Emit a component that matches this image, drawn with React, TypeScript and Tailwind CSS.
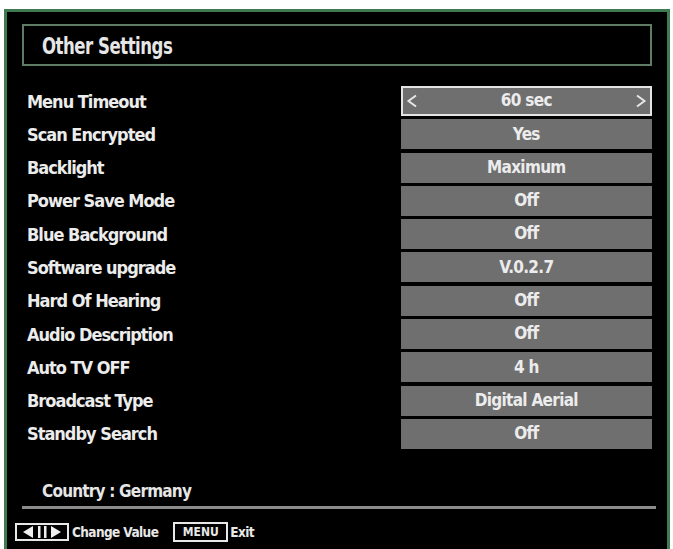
import React from "react";

const rows: [string, string][] = [
  ["Menu Timeout", "60 sec"],
  ["Scan Encrypted", "Yes"],
  ["Backlight", "Maximum"],
  ["Power Save Mode", "Off"],
  ["Blue Background", "Off"],
  ["Software upgrade", "V.0.2.7"],
  ["Hard Of Hearing", "Off"],
  ["Audio Description", "Off"],
  ["Auto TV OFF", "4 h"],
  ["Broadcast Type", "Digital Aerial"],
  ["Standby Search", "Off"],
];

const font = { fontFamily: '"DejaVu Sans Condensed", "DejaVu Sans", sans-serif' };

function ArrowKeys() {
  return (
    <svg width="54" height="18" viewBox="0 0 54 18">
      <rect x="1" y="1" width="52" height="16" fill="none" stroke="#e8e8e8" strokeWidth="2" />
      <polygon points="8,9 18,3 18,15" fill="#f0f0f0" />
      <rect x="23" y="3" width="2.5" height="12" fill="#f0f0f0" />
      <rect x="29" y="3" width="2.5" height="12" fill="#f0f0f0" />
      <polygon points="46,9 36,3 36,15" fill="#f0f0f0" />
    </svg>
  );
}

function Chevron({ dir }: { dir: "l" | "r" }) {
  return (
    <svg width="12" height="14" viewBox="0 0 12 14">
      <polyline
        points={dir === "l" ? "10,1.5 2.5,7 10,12.5" : "2,1.5 9.5,7 2,12.5"}
        fill="none"
        stroke="#e6e6e6"
        strokeWidth="2"
      />
    </svg>
  );
}

export default function App() {
  return (
    <div className="w-[673px] h-[549px] bg-white pt-[9px] pl-[4px] overflow-hidden" style={font}>
      <div className="w-[666px] h-[540px] bg-black border-[3px] border-b-0 border-[#3f7a50] flex flex-col px-[15px] pt-[12px]">
        <div className="h-[42px] border-2 border-[#5e7d64] flex items-center pl-[18px] pt-[3px]">
          <span className="inline-block text-[#e6e6e6] text-[23px] font-bold tracking-[-0.6px] scale-x-[0.8] origin-left whitespace-nowrap">
            Other Settings
          </span>
        </div>
        <div className="mt-[20px] flex flex-col">
          {rows.map(([label, value], i) => (
            <div key={label} className="h-[33.3px] flex items-start">
              <div className="w-[381px] pl-[5px] h-[30px] flex items-center text-[#ececec] text-[18px] font-bold tracking-[-1px] whitespace-nowrap">
                {label}
              </div>
              <div
                className={
                  "w-[253px] h-[30px] bg-[#6f6f6f] flex items-center justify-center relative text-[#ececec] text-[17px] font-bold tracking-[-0.7px] whitespace-nowrap " +
                  (i === 0 ? "border-2 border-[#e4e4e4]" : "")
                }
              >
                {i === 0 && (
                  <span className="absolute left-[3px] top-[6px] flex">
                    <Chevron dir="l" />
                  </span>
                )}
                {value}
                {i === 0 && (
                  <span className="absolute right-[3px] top-[6px] flex">
                    <Chevron dir="r" />
                  </span>
                )}
              </div>
            </div>
          ))}
        </div>
        <div className="mt-[28px] pl-[20px] text-[#e6e6e6] text-[17px] font-bold tracking-[-0.8px] h-[22px] flex items-center whitespace-nowrap">
          Country : Germany
        </div>
        <div className="mt-[4px] h-[3px] bg-[#8c8c8c] w-[634px]"></div>
        <div className="mt-[13px] -ml-[7px] flex items-center gap-[2px] text-[#e8e8e8] text-[13.5px] font-bold tracking-[-0.6px] whitespace-nowrap">
          <ArrowKeys />
          <span className="ml-[1px]">Change Value</span>
          <span className="ml-[13px] border-2 border-[#e8e8e8] h-[20px] w-[55px] flex items-center justify-center text-[12px] tracking-[0px]">
            MENU
          </span>
          <span>Exit</span>
        </div>
      </div>
    </div>
  );
}
